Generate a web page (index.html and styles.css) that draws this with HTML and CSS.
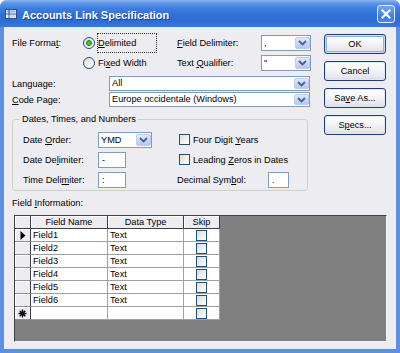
FILE: index.html
```html
<!DOCTYPE html>
<html>
<head>
<meta charset="utf-8">
<link rel="stylesheet" href="styles.css">
</head>
<body>
<div class="window">
  <div class="titlebar">
    <svg class="appicon" width="12" height="10" viewBox="0 0 12 10">
      <rect x="0.5" y="0.5" width="11" height="9" fill="#fff" stroke="#2a4f9a"/>
      <rect x="1.5" y="1.5" width="9" height="2" fill="#8fb0e6"/>
      <line x1="0.5" y1="5" x2="11.5" y2="5" stroke="#2a4f9a"/>
      <line x1="4" y1="0.5" x2="4" y2="9.5" stroke="#2a4f9a"/>
      <rect x="5" y="6" width="5.5" height="2.5" fill="#c8d8f4"/>
    </svg>
    <span class="title">Accounts Link Specification</span>
    <div class="close">
      <svg width="16" height="16" viewBox="0 0 16 16"><path d="M4.5 4.5 L11.5 11.5 M11.5 4.5 L4.5 11.5" stroke="#fff" stroke-width="2.2" stroke-linecap="square"/></svg>
    </div>
  </div>
  <div class="client">
    <div class="top">
      <div class="form">
        <div class="fmt">
          <span class="lbl">File Forma<u>t</u>:</span>
          <div class="radio-item"><span class="radio on"></span><span class="rlabel focus"><u>D</u>elimited</span></div>
          <span class="lbl"><u>F</u>ield Delimiter:</span>
          <div class="combo"><span class="val">,</span><span class="drop"><svg width="9" height="6" viewBox="0 0 9 6"><path d="M1 1 L4.5 4.5 L8 1" fill="none" stroke="#4d6185" stroke-width="1.8"/></svg></span></div>
          <span></span>
          <div class="radio-item"><span class="radio"></span><span class="rlabel">Fi<u>x</u>ed Width</span></div>
          <span class="lbl">Text <u>Q</u>ualifier:</span>
          <div class="combo"><span class="val">"</span><span class="drop"><svg width="9" height="6" viewBox="0 0 9 6"><path d="M1 1 L4.5 4.5 L8 1" fill="none" stroke="#4d6185" stroke-width="1.8"/></svg></span></div>
        </div>
        <div class="row lang">
          <span class="lbl rowlbl">Language:</span>
          <div class="combo wide"><span class="val">All</span><span class="drop"><svg width="9" height="6" viewBox="0 0 9 6"><path d="M1 1 L4.5 4.5 L8 1" fill="none" stroke="#4d6185" stroke-width="1.8"/></svg></span></div>
        </div>
        <div class="row code">
          <span class="lbl rowlbl"><u>C</u>ode Page:</span>
          <div class="combo wide"><span class="val">Europe occidentale (Windows)</span><span class="drop"><svg width="9" height="6" viewBox="0 0 9 6"><path d="M1 1 L4.5 4.5 L8 1" fill="none" stroke="#4d6185" stroke-width="1.8"/></svg></span></div>
        </div>
        <fieldset class="group">
          <legend>Dates, Times, and Numbers</legend>
          <div class="ggrid">
            <span class="lbl">Date <u>O</u>rder:</span>
            <div class="combo order"><span class="val">YMD</span><span class="drop"><svg width="9" height="6" viewBox="0 0 9 6"><path d="M1 1 L4.5 4.5 L8 1" fill="none" stroke="#4d6185" stroke-width="1.8"/></svg></span></div>
            <div class="right"><span class="check"></span><span>Four Digit <u>Y</u>ears</span></div>
            <span class="lbl">Date De<u>l</u>imiter:</span>
            <div class="text small"><span class="val">-</span></div>
            <div class="right"><span class="check"></span><span>Leading <u>Z</u>eros in Dates</span></div>
            <span class="lbl">Time Deli<u>m</u>iter:</span>
            <div class="text small"><span class="val">:</span></div>
            <div class="right dec"><span class="declbl">Decimal Sym<u>b</u>ol:</span><div class="text tiny"><span class="val">.</span></div></div>
          </div>
        </fieldset>
      </div>
      <div class="buttons">
        <div class="btn default">OK</div>
        <div class="btn">Cancel</div>
        <div class="btn">Sa<u>v</u>e As...</div>
        <div class="btn">S<u>p</u>ecs...</div>
      </div>
    </div>
    <div class="filabel">Field <u>I</u>nformation:</div>
    <div class="grid">
      <table>
        <colgroup><col class="c0"><col class="c1"><col class="c2"><col class="c3"></colgroup>
        <thead>
          <tr><th class="sel"></th><th>Field Name</th><th>Data Type</th><th>Skip</th></tr>
        </thead>
        <tbody>
          <tr><td class="sel"><svg width="6" height="9" viewBox="0 0 6 9"><path d="M0.5 0 L5.5 4.5 L0.5 9 Z" fill="#000"/></svg></td><td>Field1</td><td>Text</td><td class="sk"><span class="check"></span></td></tr>
          <tr><td class="sel"></td><td>Field2</td><td>Text</td><td class="sk"><span class="check"></span></td></tr>
          <tr><td class="sel"></td><td>Field3</td><td>Text</td><td class="sk"><span class="check"></span></td></tr>
          <tr><td class="sel"></td><td>Field4</td><td>Text</td><td class="sk"><span class="check"></span></td></tr>
          <tr><td class="sel"></td><td>Field5</td><td>Text</td><td class="sk"><span class="check"></span></td></tr>
          <tr><td class="sel"></td><td>Field6</td><td>Text</td><td class="sk"><span class="check"></span></td></tr>
          <tr><td class="sel"><svg width="9" height="9" viewBox="0 0 9 9"><path d="M4.5 0.5 V8.5 M0.5 4.5 H8.5 M1.7 1.7 L7.3 7.3 M7.3 1.7 L1.7 7.3" stroke="#000" stroke-width="1.4"/></svg></td><td></td><td></td><td class="sk"><span class="check"></span></td></tr>
        </tbody>
      </table>
    </div>
  </div>
</div>
</body>
</html>
```

FILE: styles.css
```css
html, body {
  margin: 0;
  padding: 0;
  background: #ffffff;
}
body {
  font-family: "Liberation Sans", Arial, sans-serif;
  font-size: 9.2px;
  line-height: 12px;
  color: #000;
}
u { text-decoration: underline; text-underline-offset: 1px; }

.window {
  width: 400px;
  height: 353px;
  background: #5d90e0;
  border-radius: 7px 7px 0 0;
  display: flex;
  flex-direction: column;
  overflow: hidden;
}
.titlebar {
  height: 27px;
  flex: none;
  display: flex;
  align-items: center;
  padding-left: 5px;
  box-sizing: border-box;
  background: linear-gradient(to bottom, #8db6f0 0px, #5f97e6 3px, #3f7fdf 8px, #3173d8 14px, #2d6dd3 21px, #3a78d9 27px);
}
.appicon { flex: none; margin-top: 1px; }
.title {
  margin-left: 5px;
  font-weight: bold;
  font-size: 11px;
  color: #fff;
  text-shadow: 1px 1px 0 #1a3f8c;
  padding-top: 2px;
  flex: 1;
}
.close {
  width: 18px;
  height: 18px;
  box-sizing: border-box;
  margin-right: 5px;
  border: 1px solid #e6eefb;
  border-radius: 3px;
  background: linear-gradient(to bottom, #74a4ef, #3e7add 70%, #4d86e2);
  display: flex;
  align-items: center;
  justify-content: center;
}

.client {
  flex: 1;
  margin: 0 4px 4px 4px;
  background: #edecf1;
  padding: 6px 0 7px 8px;
  display: flex;
  flex-direction: column;
}
.top { display: flex; align-items: flex-start; }
.form { width: 299px; flex: none; }

.fmt {
  display: grid;
  grid-template-columns: 71px 94px 84px 50px;
  grid-template-rows: 20px 19px;
  align-items: center;
}
.lbl { white-space: nowrap; }
.radio-item { display: flex; align-items: center; height: 100%; }
.radio {
  width: 12px;
  height: 12px;
  flex: none;
  box-sizing: border-box;
  border-radius: 50%;
  border: 1px solid #1c5180;
  background: linear-gradient(135deg, #dcdcd7 0%, #f2f2ef 60%, #ffffff 100%);
}
.radio.on {
  background: radial-gradient(circle, #5fd85f 0, #27a827 2px, #1f9a1f 2.6px, transparent 3.2px),
              linear-gradient(135deg, #dcdcd7 0%, #f2f2ef 60%, #ffffff 100%);
}
.rlabel {
  margin-left: 2px;
  width: 60px;
  height: 20px;
  box-sizing: border-box;
  border: 1px solid transparent;
  display: flex;
  align-items: center;
  white-space: nowrap;
}
.rlabel.focus { border: 1px dotted #333; }

.combo {
  height: 16px;
  box-sizing: border-box;
  border: 1px solid #7f9db9;
  background: #fff;
  display: flex;
}
.val {
  flex: 1;
  padding-left: 2px;
  line-height: 14px;
  white-space: nowrap;
  overflow: hidden;
}
.drop {
  width: 15px;
  flex: none;
  margin: 1px 0;
  box-sizing: border-box;
  border: 1px solid #bccbf0;
  border-radius: 2px;
  background: linear-gradient(to bottom, #e1eafe 0%, #c9d8fa 50%, #b4c8f5 100%);
  display: flex;
  align-items: center;
  justify-content: center;
}

.row { display: flex; align-items: center; height: 15px; }
.row.lang { margin-top: 4px; }
.row.code { margin-top: 1px; }
.rowlbl { width: 97px; flex: none; }
.combo.wide { width: 201px; height: 15px; }
.combo.wide .val { line-height: 13px; }

.group {
  margin: 6px 0 0 0;
  width: 296px;
  box-sizing: border-box;
  border: 1px solid #d0d0bf;
  border-radius: 3px;
  padding: 6px 0 2px 0;
  min-width: 0;
}
.group legend {
  margin-left: 7px;
  padding: 0 2px;
  line-height: 12px;
}
.ggrid {
  margin-left: 10px;
  display: grid;
  grid-template-columns: 75px 54px 1fr;
  grid-template-rows: 17px 17px 17px;
  row-gap: 3px;
  align-items: center;
}
.combo.order { width: 54px; }
.text {
  height: 16px;
  box-sizing: border-box;
  border: 1px solid #7f9db9;
  background: #fff;
  display: flex;
}
.text .val { padding-left: 3px; }
.text.small { width: 28px; }
.text.tiny { width: 21px; }
.right {
  padding-left: 27px;
  display: flex;
  align-items: center;
  gap: 3px;
  white-space: nowrap;
}
.right.dec { padding-left: 25px; gap: 0; }
.declbl { width: 91px; flex: none; }
.check {
  display: inline-block;
  width: 11px;
  height: 11px;
  box-sizing: border-box;
  border: 1px solid #1c5180;
  background: linear-gradient(135deg, #dcdcd7 0%, #f0f0ec 55%, #ffffff 100%);
  flex: none;
}

.buttons {
  margin-left: 13px;
  margin-top: 1px;
  display: flex;
  flex-direction: column;
  gap: 7px;
}
.btn {
  width: 62px;
  height: 20px;
  box-sizing: border-box;
  border: 1px solid #1f3f7a;
  border-radius: 3px;
  background: linear-gradient(to bottom, #ffffff 0%, #f5f5f7 45%, #e6e6ec 85%, #d6d6de 100%);
  box-shadow: inset 0 0 0 1px #dfe6f6;
  display: flex;
  align-items: center;
  justify-content: center;
  white-space: nowrap;
}
.btn.default {
  box-shadow: inset 0 0 0 1px #cadcf8, inset 0 0 0 2px #8db2ea;
}

.filabel { margin-top: 6px; line-height: 12px; }
.grid {
  margin-top: 6px;
  margin-left: 2px;
  width: 373px;
  height: 127px;
  box-sizing: border-box;
  border: 1px solid;
  border-color: #404040 #f8f8f8 #f8f8f8 #404040;
  background: #808080;
  overflow: hidden;
}
table {
  border-collapse: separate;
  border-spacing: 0;
  table-layout: fixed;
  width: 205px;
}
col.c0 { width: 16px; }
col.c1 { width: 77px; }
col.c2 { width: 76px; }
col.c3 { width: 36px; }
th, td {
  padding: 0;
  line-height: 12px;
  height: 12px;
  font-weight: normal;
  white-space: nowrap;
  overflow: hidden;
}
th {
  background: #edecf1;
  border-right: 1px solid #404040;
  border-bottom: 1px solid #404040;
  box-shadow: inset 1px 1px 0 #ffffff;
  text-align: center;
}
td {
  background: #fff;
  border-right: 1px solid #a0a0a0;
  border-bottom: 1px solid #a0a0a0;
  padding-left: 2px;
}
td.sel, th.sel {
  background: #edecf1;
  border-right: 1px solid #404040;
  border-bottom: 1px solid #909090;
  box-shadow: inset 1px 1px 0 #ffffff;
  text-align: center;
  padding-left: 0;
}
th.sel { border-bottom: 1px solid #404040; }
td.sel svg { display: inline-block; vertical-align: middle; }
td.sk { text-align: center; padding-left: 0; }
td.sk .check { vertical-align: middle; }
```
